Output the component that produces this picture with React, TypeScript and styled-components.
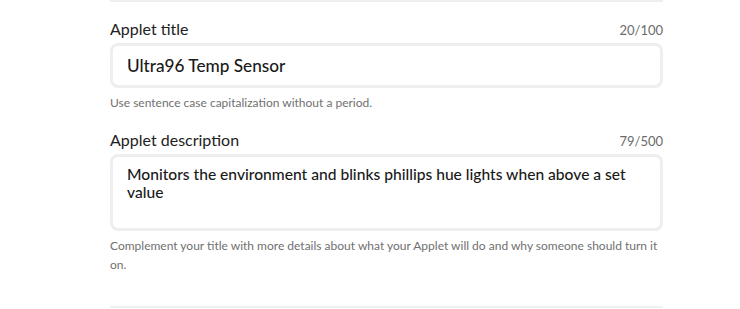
import React from "react";
import styled, { createGlobalStyle } from "styled-components";

const GlobalStyle = createGlobalStyle`
  body {
    margin: 0;
    background: #ffffff;
    font-family: Lato, "Noto Sans", sans-serif;
    color: #222222;
  }
`;

const Page = styled.div`
  padding-left: 110px;
`;

const Section = styled.section`
  width: 553px;
  border-top: 2px solid #eeeeee;
  border-bottom: 2px solid #f0f0f0;
  padding: 17px 0 32px;
  display: flex;
  flex-direction: column;
  gap: 18px;
`;

const Field = styled.div`
  display: flex;
  flex-direction: column;
`;

const LabelRow = styled.div`
  display: flex;
  justify-content: space-between;
  align-items: baseline;
  height: 20px;
  margin-bottom: 4px;
`;

const Label = styled.label`
  font-size: 16px;
  line-height: 20px;
  color: #222222;
`;

const Counter = styled.span`
  font-size: 13px;
  line-height: 20px;
  color: #6b6b6b;
`;

const Box = styled.div<{ $multiline?: boolean }>`
  box-sizing: border-box;
  border: 3px solid #eeeeee;
  border-radius: 8px;
  padding: ${({ $multiline }) => ($multiline ? "8px 14px" : "0 14px")};
  height: ${({ $multiline }) => ($multiline ? "77px" : "45px")};
  display: flex;
  align-items: ${({ $multiline }) => ($multiline ? "flex-start" : "center")};
  font-size: ${({ $multiline }) => ($multiline ? "15.6px" : "17.2px")};
  line-height: ${({ $multiline }) => ($multiline ? "18px" : "22px")};
  font-weight: 500;
  color: #1a1a1a;
`;

const Help = styled.p`
  margin: 5px 0 0;
  font-size: 12px;
  line-height: 19px;
  color: #707070;
`;

export default function App() {
  return (
    <Page>
      <GlobalStyle />
      <Section>
        <Field>
          <LabelRow>
            <Label>Applet title</Label>
            <Counter>20/100</Counter>
          </LabelRow>
          <Box>Ultra96 Temp Sensor</Box>
          <Help>Use sentence case capitalization without a period.</Help>
        </Field>
        <Field>
          <LabelRow>
            <Label>Applet description</Label>
            <Counter>79/500</Counter>
          </LabelRow>
          <Box $multiline>
            Monitors the environment and blinks phillips hue lights when above a set value
          </Box>
          <Help>
            Complement your title with more details about what your Applet will do and why
            someone should turn it on.
          </Help>
        </Field>
      </Section>
    </Page>
  );
}
